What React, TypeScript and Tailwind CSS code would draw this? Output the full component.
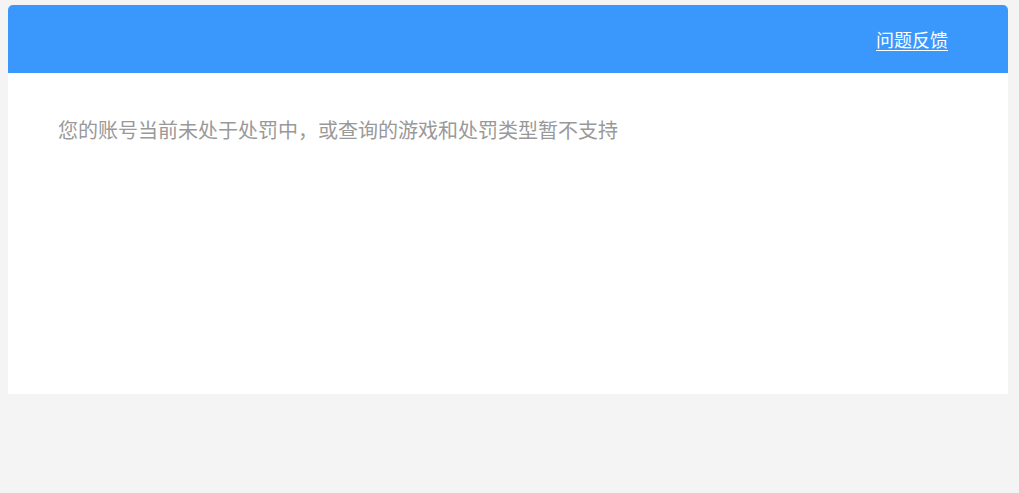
import React from "react";

/** Penalty query result */
export default function App() {
  return (
    <main
      className="min-h-screen w-full bg-[#f4f4f4] pt-[5px]"
      style={{ fontFamily: '"Noto Sans CJK SC", "Noto Sans", sans-serif' }}
    >
      <div className="ml-[8px] w-[1000px]">
        {/* Header */}
        <div className="flex h-[68px] items-center justify-end rounded-t-[5px] bg-[#3a98fd] pr-[60px]">
          <a href="#" className="text-[18px] leading-none text-white underline underline-offset-[3px]">
            问题反馈
          </a>
        </div>

        {/* Body */}
        <div className="h-[321px] bg-white pl-[50px] pt-[42px]">
          <p className="text-[20px] leading-[30px] text-[#999999]">
            您的账号当前未处于处罚中，或查询的游戏和处罚类型暂不支持
          </p>
        </div>
      </div>
    </main>
  );
}
